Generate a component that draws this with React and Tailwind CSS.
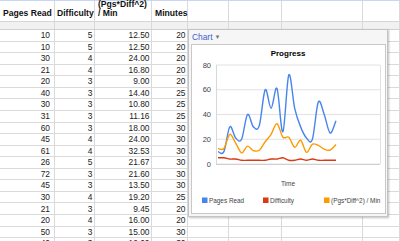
import React from "react";

const rows = [
  [10, 5, "12.50", 20],
  [10, 5, "12.50", 20],
  [30, 4, "24.00", 20],
  [21, 4, "16.80", 20],
  [20, 3, "9.00", 20],
  [40, 3, "14.40", 25],
  [30, 3, "10.80", 25],
  [31, 3, "11.16", 25],
  [60, 3, "18.00", 30],
  [45, 4, "24.00", 30],
  [61, 4, "32.53", 30],
  [26, 5, "21.67", 30],
  [72, 3, "21.60", 30],
  [45, 3, "13.50", 30],
  [30, 4, "19.20", 25],
  [21, 3, "9.45", 20],
  [20, 4, "16.00", 20],
  [50, 3, "15.00", 30],
  [40, 3, "12.00", 30],
];

// rows further down the sheet that still show up in the chart
const moreRows = [
  [25, 3, "11.25", 20],
  [35, 3, "15.75", 20],
];

const allRows = [...rows, ...moreRows];

const series = [
  { label: "Pages Read", color: "#4684ee", values: allRows.map((r) => r[0]), lx: 202 },
  { label: "Difficulty", color: "#dc3912", values: allRows.map((r) => r[1]), lx: 263 },
  { label: "(Pgs*Diff^2) / Min", color: "#ff9900", values: allRows.map((r) => parseFloat(r[2])), lx: 324 },
];

const yOf = (v) => 164 - (v * 99) / 80;
const xOf = (i) => 218 + i * 5.9;

// catmull-rom through the points, as cubic beziers
function curve(values) {
  const pts = values.map((v, i) => [xOf(i), yOf(v)]);
  let d = `M${pts[0][0].toFixed(2)},${pts[0][1].toFixed(2)}`;
  for (let i = 0; i < pts.length - 1; i++) {
    const p0 = pts[i - 1] || pts[i];
    const p1 = pts[i];
    const p2 = pts[i + 1];
    const p3 = pts[i + 2] || p2;
    const c1 = [p1[0] + (p2[0] - p0[0]) / 6, p1[1] + (p2[1] - p0[1]) / 6];
    const c2 = [p2[0] - (p3[0] - p1[0]) / 6, p2[1] - (p3[1] - p1[1]) / 6];
    d += ` C${c1[0].toFixed(2)},${c1[1].toFixed(2)} ${c2[0].toFixed(2)},${c2[1].toFixed(2)} ${p2[0].toFixed(2)},${p2[1].toFixed(2)}`;
  }
  return d;
}

const widths = ["w-[55px]", "w-[40px]", "w-[57px]", "w-[36px]", "w-[41px]", "w-[53px]", "w-[81px]", "flex-1"];
const cell = "h-full border-r border-[#dadada] shrink-0";

function Row({ values }) {
  return (
    <div className="flex h-[11.57px] border-b border-[#dadada] text-[8.4px] leading-none text-[#222]">
      {widths.map((w, i) => (
        <div
          key={i}
          className={`${cell} ${w} flex items-center justify-end ${i === 0 ? "pr-[4px]" : "pr-[1.5px]"}`}
        >
          {values[i] ?? ""}
        </div>
      ))}
    </div>
  );
}

function Chart() {
  const grid = [80, 60, 40, 20, 0];
  return (
    <div className="absolute left-[188px] top-[29px] w-[200px] h-[188px] border border-[#c4c4c4] bg-[#f6f6f6] shadow-[1px_1px_2px_rgba(0,0,0,0.25)]">
      <div className="flex items-center h-[14px] pl-[3px] pt-[1px] text-[8.4px] text-[#3d5fd3]">
        Chart
        <span className="ml-[2px] text-[6px] text-[#777]">▼</span>
      </div>
      <div className="ml-[2px] w-[195px] h-[170px] border border-[#c8c8c8] bg-white">
        <svg width="193" height="168" viewBox="192 45 193 168" className="block">
          <text x="288" y="56" textAnchor="middle" fontSize="8" fontWeight="bold" fill="#000">
            Progress
          </text>
          {grid.map((g) => (
            <g key={g}>
              <line x1="216" x2="380" y1={yOf(g)} y2={yOf(g)} stroke="#e2e2e2" strokeWidth="1" />
              <text x="211" y={yOf(g) + 2.7} textAnchor="end" fontSize="7.5" fill="#444">
                {g}
              </text>
            </g>
          ))}
          <line x1="216.5" x2="216.5" y1="65" y2="164" stroke="#d8d8d8" />
          <line x1="380.5" x2="380.5" y1="65" y2="164" stroke="#e2e2e2" />
          <line x1="216" x2="380" y1="164.5" y2="164.5" stroke="#cfcfcf" />
          {series.map((s) => (
            <path key={s.label} d={curve(s.values)} fill="none" stroke={s.color} strokeWidth="1.4" />
          ))}
          <text x="288" y="186" textAnchor="middle" fontSize="6.5" fill="#444">
            Time
          </text>
          {series.map((s) => (
            <g key={s.label}>
              <rect x={s.lx} y="197.5" width="5.5" height="5.5" fill={s.color} />
              <text x={s.lx + 7} y="203" fontSize="6.4" fill="#444">
                {s.label}
              </text>
            </g>
          ))}
        </svg>
      </div>
    </div>
  );
}

export default function App() {
  return (
    <div className="relative w-[400px] h-[241px] overflow-hidden bg-white font-['Liberation_Sans',Arial,sans-serif]">
      {/* header row */}
      <div className="flex h-[22px] border-t border-t-[#c6d6f4] border-b border-b-[#d6d6d6] text-[8.6px] leading-[9px] font-bold text-[#111]">
        <div className={`${cell} ${widths[0]} flex items-end pl-[3px] pb-[3px]`}>Pages Read</div>
        <div className={`${cell} ${widths[1]} flex items-end pl-[2px] pb-[3px]`}>Difficulty</div>
        <div className={`${cell} ${widths[2]} flex flex-col justify-end pl-[3px] pb-[3px]`}>
          <span>(Pgs*Diff^2)</span>
          <span>/ Min</span>
        </div>
        <div className={`${cell} ${widths[3]} flex items-end pl-[3px] pb-[3px]`}>Minutes</div>
        <div className={`${cell} ${widths[4]}`} />
        <div className={`${cell} ${widths[5]}`} />
        <div className={`${cell} ${widths[6]}`} />
        <div className={`${cell} ${widths[7]}`} />
      </div>

      {/* frozen-row bar */}
      <div className="flex h-[8px] border-b border-[#d0d0d0] bg-[#f1f1f1]">
        {widths.map((w, i) => (
          <div key={i} className={`${cell} ${w}`} />
        ))}
      </div>

      {rows.map((r, i) => (
        <Row key={i} values={r} />
      ))}

      <Chart />
    </div>
  );
}
